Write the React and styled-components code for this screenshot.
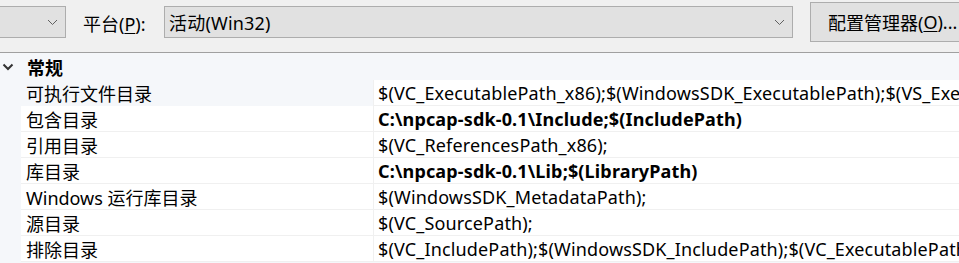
import React from "react";
import styled, { createGlobalStyle } from "styled-components";

const Global = createGlobalStyle`
  html, body { margin: 0; padding: 0; overflow: hidden; background: #f5f7fa; }
  body { width: 959px; height: 263px; font-family: "Noto Sans", "Noto Sans CJK SC", sans-serif; color: #000; }
`;

const Page = styled.div`
  width: 959px;
  height: 263px;
  overflow: hidden;
  display: flex;
  flex-direction: column;
`;

const Toolbar = styled.div`
  height: 53px;
  flex: none;
  box-sizing: border-box;
  background: #f0f0f0;
  border-bottom: 1px solid #a0a0a0;
  display: flex;
  align-items: flex-start;
  white-space: nowrap;
`;

const Combo = styled.div`
  box-sizing: border-box;
  margin-top: 6px;
  height: 32px;
  width: ${(p) => p.$w}px;
  margin-left: ${(p) => p.$ml || 0}px;
  background: #e1e1e1;
  border: 1px solid #adadad;
  display: flex;
  align-items: center;
  padding-left: 4px;
  padding-right: 7px;
  font-size: 18px;
  letter-spacing: 0.2px;
  flex: none;
`;

const ComboText = styled.span`
  flex: 1;
`;

const Label = styled.span`
  margin-left: 17px;
  margin-top: 10px;
  width: 81px;
  font-size: 18px;
  flex: none;
`;

const Button = styled.div`
  box-sizing: border-box;
  margin-left: 17px;
  margin-top: 2px;
  height: 40px;
  width: 170px;
  flex: none;
  background: #e1e1e1;
  border: 1px solid #adadad;
  display: flex;
  align-items: center;
  padding-left: 17px;
  font-size: 18px;
`;

const U = styled.span`
  text-decoration: underline;
  text-underline-offset: 2px;
`;

const Grid = styled.div`
  flex: 1;
  display: flex;
  flex-direction: column;
`;

const Category = styled.div`
  height: 27px;
  display: flex;
  align-items: center;
  font-size: 18px;
  font-weight: 700;
`;

const Chevron = styled.svg`
  width: 12px;
  height: 8px;
  margin-left: 2px;
  margin-right: 13px;
`;

const Row = styled.div`
  height: 26px;
  display: grid;
  grid-template-columns: 21px 352px 1px 1fr;
  font-size: 18px;
`;

const NameCell = styled.div`
  box-sizing: border-box;
  background: ${(p) => (p.$hl ? "#f5f7fa" : "#ffffff")};
  border-bottom: 1px solid ${(p) => (p.$hl ? "#f5f7fa" : "#f0f0f0")};
  padding-left: 5px;
  display: flex;
  align-items: center;
  white-space: nowrap;
  overflow: hidden;
`;

const Divider = styled.div`
  background: #f0f0f0;
`;

const ValueCell = styled.div`
  box-sizing: border-box;
  background: #ffffff;
  border-bottom: 1px solid #f0f0f0;
  padding-left: 4px;
  display: flex;
  align-items: center;
  white-space: nowrap;
  overflow: hidden;
  font-weight: ${(p) => (p.$bold ? 700 : 400)};
  letter-spacing: 0.15px;
`;

const SmallChevron = () => (
  <svg width="11" height="7" viewBox="0 0 11 7">
    <path d="M1 1 L5.5 5.5 L10 1" fill="none" stroke="#606060" strokeWidth="1" />
  </svg>
);

const rows = [
  { name: "可执行文件目录", value: "$(VC_ExecutablePath_x86);$(WindowsSDK_ExecutablePath);$(VS_ExecutablePath);$(MSBuild_ExecutablePath)", hl: true },
  { name: "包含目录", value: "C:\\npcap-sdk-0.1\\Include;$(IncludePath)", bold: true },
  { name: "引用目录", value: "$(VC_ReferencesPath_x86);" },
  { name: "库目录", value: "C:\\npcap-sdk-0.1\\Lib;$(LibraryPath)", bold: true },
  { name: "Windows 运行库目录", value: "$(WindowsSDK_MetadataPath);" },
  { name: "源目录", value: "$(VC_SourcePath);" },
  { name: "排除目录", value: "$(VC_IncludePath);$(WindowsSDK_IncludePath);$(VC_ExecutablePath_x86);" },
];

export default function App() {
  return (
    <Page>
      <Global />
      <Toolbar>
        <Combo $w={76} $ml={-10}>
          <ComboText />
          <SmallChevron />
        </Combo>
        <Label>
          平台(<U>P</U>):
        </Label>
        <Combo $w={629}>
          <ComboText>活动(Win32)</ComboText>
          <SmallChevron />
        </Combo>
        <Button>
          配置管理器(<U>O</U>)...
        </Button>
      </Toolbar>
      <Grid>
        <Category>
          <Chevron viewBox="0 0 12 8">
            <path d="M1.5 1.5 L6 6 L10.5 1.5" fill="none" stroke="#333" strokeWidth="2" />
          </Chevron>
          常规
        </Category>
        {rows.map((r) => (
          <Row key={r.name}>
            <div />
            <NameCell $hl={r.hl}>{r.name}</NameCell>
            <Divider />
            <ValueCell $bold={r.bold}>{r.value}</ValueCell>
          </Row>
        ))}
      </Grid>
    </Page>
  );
}
